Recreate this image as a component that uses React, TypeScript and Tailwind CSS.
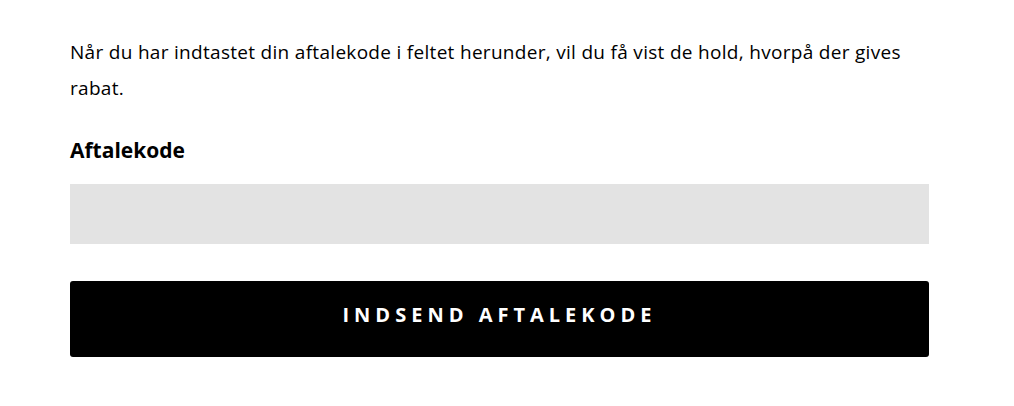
export default function App() {
  return (
    <div className="min-h-screen bg-white" style={{ fontFamily: '"Open Sans", Lato, sans-serif' }}>
      <div className="w-[859px] ml-[70px] pt-[34px]">
        <p className="text-[19px] leading-[36px] tracking-[0.3px] text-black">
          Når du har indtastet din aftalekode i feltet herunder, vil du få vist de hold, hvorpå der gives rabat.
        </p>
        <h3 className="mt-[30px] text-[21px] leading-[28px] font-bold text-black">Aftalekode</h3>
        <input type="text" className="mt-[20px] block w-full h-[60px] bg-[#e3e3e3] outline-none px-4" />
        <button className="mt-[37px] w-full h-[76px] pb-[8px] bg-black rounded-[3px] text-white text-[20px] font-bold uppercase tracking-[5px]">
          Indsend aftalekode
        </button>
      </div>
    </div>
  );
}
